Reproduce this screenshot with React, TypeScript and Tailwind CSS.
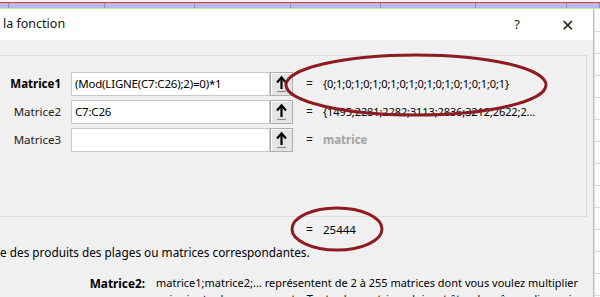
import React from "react";

function UpButton() {
  return (
    <button
      type="button"
      className="flex h-[24px] w-[23px] shrink-0 items-center justify-center border border-[#adadad] bg-[#e5e5e5] shadow-[inset_1px_1px_0_#fff]"
      aria-label="Sélectionner"
    >
      <svg width="21" height="22" viewBox="0 0 21 22">
        <path d="M10.5 4.5V16" stroke="#000" strokeWidth="2.2" fill="none" />
        <path d="M6 9.5L10.5 4.5L15 9.5" stroke="#000" strokeWidth="2.2" fill="none" strokeLinejoin="miter" />
        <path d="M6 18.5H15" stroke="#8a8a8a" strokeWidth="1.2" />
      </svg>
    </button>
  );
}

type Row = { label: string; bold?: boolean; input: string; value: string; muted?: boolean };

const rows: Row[] = [
  { label: "Matrice1", bold: true, input: "(Mod(LIGNE(C7:C26);2)=0)*1", value: "{0;1;0;1;0;1;0;1;0;1;0;1;0;1;0;1;0;1;0;1}" },
  { label: "Matrice2", input: "C7:C26", value: "{1495;2281;2282;3113;2836;3212;2622;2..." },
  { label: "Matrice3", input: "", value: "matrice", muted: true },
];

const sheetCols = [9, 96, 90, 96, 90, 95, 91, 33];

export default function App() {
  return (
    <div className="relative h-[297px] w-[600px] overflow-hidden bg-white font-['Noto_Sans',_'Liberation_Sans',_sans-serif] text-[12px] text-[#1a1a1a]">
      {/* spreadsheet behind the dialog */}
      <div className="flex h-[9px] flex-col">
        <div className="h-[2px] bg-[#f8eeee]" />
        <div className="h-[1px] bg-[#e23b2e]" />
        <div className="flex h-[5px] bg-[#b7b8ee]">
          {sheetCols.map((w, i) => (
            <div key={i} style={{ width: w }} className="border-r border-[#8f8fd0]" />
          ))}
        </div>
        <div className="h-[1px] bg-[#c9e7a6]" />
      </div>

      <div className="flex h-[288px]">
        <div className="flex w-[594px] shrink-0 flex-col border-r border-[#a7d27a]">
          <div className="flex h-[31px] shrink-0 items-center bg-white">
            <span className="pl-[3px] text-[12.5px] text-[#111]">la fonction</span>
            <span className="ml-auto mr-[41px] text-[13px] text-[#222]">?</span>
            <span className="mr-[19px] text-[16px] leading-none text-[#222]">✕</span>
          </div>

          <div className="flex flex-1 flex-col bg-[#f0f0f0]">
            <div className="mr-[6px] mt-[15px] flex h-[162px] flex-col gap-[4px] border border-l-0 border-[#dcdcdc] pt-[16px]">
              {rows.map((r) => (
                <div key={r.label} className="flex h-[24px] items-center">
                  <span className={`w-[61px] text-right text-[11.5px] ${r.bold ? "font-bold text-black" : "text-[#222]"}`}>
                    {r.label}
                  </span>
                  <div className="ml-[10px] flex h-[24px] w-[199px] items-center border border-[#c8c8c8] bg-white pl-[3px] text-[11.5px] tracking-[-0.2px] text-black">
                    {r.input}
                  </div>
                  <UpButton />
                  <span className="ml-[13px] w-[17px] text-[12px]">=</span>
                  <span className={r.muted ? "text-[11.5px] font-bold text-[#a3a3a3]" : "text-[11px] tracking-[-0.1px] text-black"}>
                    {r.value}
                  </span>
                </div>
              ))}
            </div>

            <div className="mt-[5px] flex h-[16px] items-center pl-[306px] text-[12px] text-black">
              <span className="w-[17px]">=</span>
              <span className="text-[11.5px]">25444</span>
            </div>

            <div className="mt-[6px] h-[16px] text-[11.8px] leading-[16px] text-black">
              e des produits des plages ou matrices correspondantes.
            </div>

            <div className="mt-[15px] flex text-[11px] leading-[16px] text-black">
              <span className="w-[145px] shrink-0 text-right text-[11.8px] font-bold">Matrice2:</span>
              <span className="ml-[11px] whitespace-nowrap">
                matrice1;matrice2;... représentent de 2 à 255 matrices dont vous voulez multiplier
                <br />
                puis ajouter les composants. Toutes les matrices doivent être de mêmes dimensions.
              </span>
            </div>
          </div>
        </div>

        <div className="flex flex-1 flex-col border-l border-[#e2e2e2] bg-[#fbfbfb]">
          <div className="h-[23px] shrink-0 border-b border-[#d6d6d6]" />
          {Array.from({ length: 12 }).map((_, i) => (
            <div key={i} className="h-[22px] shrink-0 border-b border-[#d6d6d6]" />
          ))}
        </div>
      </div>

      {/* red annotation circles */}
      <svg className="pointer-events-none absolute left-0 top-0" width="600" height="297">
        <ellipse cx="416" cy="85" rx="130" ry="30" fill="none" stroke="#8d1c22" strokeWidth="3" />
        <ellipse cx="337" cy="229" rx="45" ry="21" fill="none" stroke="#8d1c22" strokeWidth="3" />
      </svg>
    </div>
  );
}
